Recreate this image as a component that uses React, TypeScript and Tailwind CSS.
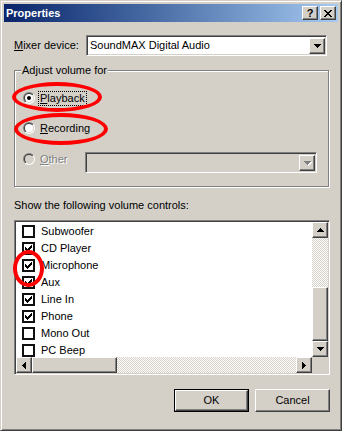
import React from 'react';

const raised =
  'border border-t-white border-l-white border-r-[#404040] border-b-[#404040] shadow-[inset_-1px_-1px_0_#808080]';
const sunken =
  'border border-t-[#808080] border-l-[#808080] border-r-white border-b-white shadow-[inset_1px_1px_0_#404040,inset_-1px_-1px_0_#d4d0c8]';
const checker =
  'bg-[image:repeating-conic-gradient(#ffffff_0%_25%,#d4d0c8_0%_50%)] bg-size-[2px_2px]';

type Dir = 'up' | 'down' | 'left' | 'right';

const arrowPaths: Record<Dir, string> = {
  down: 'M0 0h7v1H0z M1 1h5v1H1z M2 2h3v1H2z M3 3h1v1H3z',
  up: 'M3 0h1v1H3z M2 1h3v1H2z M1 2h5v1H1z M0 3h7v1H0z',
  right: 'M0 0h1v7H0z M1 1h1v5H1z M2 2h1v3H2z M3 3h1v1H3z',
  left: 'M3 0h1v7H3z M2 1h1v5H2z M1 2h1v3H1z M0 3h1v1H0z',
};

const Arrow: React.FC<{ dir: Dir; disabled?: boolean }> = ({ dir, disabled }) => {
  const vertical = dir === 'up' || dir === 'down';
  const w = vertical ? 7 : 4;
  const h = vertical ? 4 : 7;
  return (
    <svg width={w + 1} height={h + 1} viewBox={`0 0 ${w + 1} ${h + 1}`} className="block">
      {disabled && <path d={arrowPaths[dir]} fill="#ffffff" transform="translate(1 1)" />}
      <path d={arrowPaths[dir]} fill={disabled ? '#808080' : '#000000'} />
    </svg>
  );
};

const ScrollBtn: React.FC<{ dir: Dir; disabled?: boolean }> = ({ dir, disabled }) => (
  <div className={`${raised} flex h-[16px] w-[16px] shrink-0 items-center justify-center bg-[#d4d0c8] pl-[1px] pt-[1px]`}>
    <Arrow dir={dir} disabled={disabled} />
  </div>
);

const CloseGlyph = () => (
  <svg width="8" height="7" viewBox="0 0 8 7" className="block">
    <path
      d="M0 0h2v1H0z M6 0h2v1H6z M1 1h2v1H1z M5 1h2v1H5z M2 2h4v1H2z M3 3h2v1H3z M2 4h4v1H2z M1 5h2v1H1z M5 5h2v1H5z M0 6h2v1H0z M6 6h2v1H6z"
      fill="#000"
    />
  </svg>
);

const TitleBtn: React.FC<{ children: React.ReactNode }> = ({ children }) => (
  <div className={`${raised} flex h-[14px] w-[16px] items-center justify-center bg-[#d4d0c8] text-[11px] font-bold leading-none`}>
    {children}
  </div>
);

const Radio: React.FC<{ checked?: boolean; disabled?: boolean }> = ({ checked, disabled }) => (
  <svg width="12" height="12" viewBox="0 0 12 12" className="block shrink-0">
    <defs>
      <linearGradient id="rOuter" x1="0" y1="0" x2="1" y2="1">
        <stop offset="0.5" stopColor="#808080" />
        <stop offset="0.5" stopColor="#ffffff" />
      </linearGradient>
      <linearGradient id="rInner" x1="0" y1="0" x2="1" y2="1">
        <stop offset="0.5" stopColor="#404040" />
        <stop offset="0.5" stopColor="#d4d0c8" />
      </linearGradient>
    </defs>
    <circle cx="6" cy="6" r="6" fill="url(#rOuter)" />
    <circle cx="6" cy="6" r="5" fill="url(#rInner)" />
    <circle cx="6" cy="6" r="4" fill={disabled ? '#d4d0c8' : '#ffffff'} />
    {checked && <circle cx="6" cy="6" r="2" fill="#000" />}
  </svg>
);

const Check = () => (
  <svg width="7" height="7" viewBox="0 0 7 7" className="block">
    <path
      d="M6 0h1v1H6z M5 1h2v1H5z M0 2h1v1H0z M4 2h3v1H4z M0 3h2v1H0z M3 3h3v1H3z M0 4h5v1H0z M1 5h3v1H1z M2 6h1v1H2z"
      fill="#000"
    />
  </svg>
);

const CheckBox: React.FC<{ checked?: boolean }> = ({ checked }) => (
  <div className="flex h-[13px] w-[13px] shrink-0 items-center justify-center border-2 border-[#111] bg-white">
    {checked && <Check />}
  </div>
);

const controls = [
  { label: 'Subwoofer', on: false },
  { label: 'CD Player', on: true },
  { label: 'Microphone', on: true },
  { label: 'Aux', on: true },
  { label: 'Line In', on: true },
  { label: 'Phone', on: true },
  { label: 'Mono Out', on: false },
  { label: 'PC Beep', on: false },
];

export default function App() {
  return (
    <div className="relative flex h-[431px] w-[342px] flex-col border border-t-[#d4d0c8] border-l-[#d4d0c8] border-r-[#404040] border-b-[#404040] bg-[#d4d0c8] p-[3px] font-['Liberation_Sans',Arial,sans-serif] text-[11px] leading-[13px] text-black shadow-[inset_1px_1px_0_#fff,inset_-1px_-1px_0_#808080]">
      {/* title bar */}
      <div className="flex h-[18px] shrink-0 items-center bg-linear-to-r from-[#0a246a] to-[#a6caf0] pl-[2px] pr-[2px]">
        <span className="font-bold text-white">Properties</span>
        <div className="ml-auto flex gap-[2px]">
          <TitleBtn>?</TitleBtn>
          <TitleBtn>
            <CloseGlyph />
          </TitleBtn>
        </div>
      </div>

      <div className="flex flex-1 flex-col pl-[10px] pr-[8px]">
        {/* mixer device */}
        <div className="mt-[13px] flex items-center">
          <span className="w-[72px]">
            <u>M</u>ixer device:
          </span>
          <div className={`${sunken} flex h-[21px] w-[241px] items-center bg-white p-[1px]`}>
            <span className="flex-1 pl-[2px]">SoundMAX Digital Audio</span>
            <ScrollBtn dir="down" />
          </div>
        </div>

        {/* adjust volume group */}
        <div className="relative mr-[1px] mt-[14px] h-[117px] border border-[#808080] shadow-[1px_1px_0_#fff,inset_1px_1px_0_#fff]">
          <span className="absolute -top-[7px] left-[6px] bg-[#d4d0c8] px-[1px]">Adjust volume for</span>
          <div className="flex flex-col pl-[8px] pt-[17px]">
            <div className="flex h-[20px] items-center">
              <Radio checked />
              <span className="ml-[3px] border border-dotted border-black px-[1px]">
                <u>P</u>layback
              </span>
            </div>
            <div className="mt-[10px] flex h-[20px] items-center">
              <Radio />
              <span className="ml-[3px] border border-transparent px-[1px]">
                <u>R</u>ecording
              </span>
            </div>
            <div className="mt-[14px] flex items-start">
              <div className="flex h-[14px] w-[62px] items-center">
                <Radio disabled />
                <span className="ml-[3px] border border-transparent px-[1px] text-[#808080] [text-shadow:1px_1px_0_#fff]">
                  <u>O</u>ther
                </span>
              </div>
              <div className={`${sunken} flex h-[21px] w-[232px] items-center justify-end bg-[#d4d0c8] p-[1px]`}>
                <ScrollBtn dir="down" disabled />
              </div>
            </div>
          </div>
        </div>

        <div className="mt-[12px]">Show the following volume controls:</div>

        {/* list */}
        <div className={`${sunken} mt-[8px] flex flex-col bg-white p-[1px]`}>
          <div className="flex h-[135px]">
            <div className="flex-1 overflow-hidden pt-[1px]">
              {controls.map((c) => (
                <div key={c.label} className="flex h-[17px] items-center gap-[6px] pl-[6px]">
                  <CheckBox checked={c.on} />
                  <span>{c.label}</span>
                </div>
              ))}
            </div>
            <div className="flex w-[16px] flex-col">
              <ScrollBtn dir="up" />
              <div className={`h-[49px] ${checker}`} />
              <div className={`${raised} h-[54px] bg-[#d4d0c8]`} />
              <ScrollBtn dir="down" />
            </div>
          </div>
          <div className="flex h-[16px]">
            <ScrollBtn dir="left" />
            <div className={`${raised} w-[85px] bg-[#d4d0c8]`} />
            <div className={`flex-1 ${checker}`} />
            <ScrollBtn dir="right" />
            <div className="w-[16px] bg-[#d4d0c8]" />
          </div>
        </div>

        {/* buttons */}
        <div className="mt-[14px] flex justify-end gap-[6px]">
          <div className="h-[23px] w-[75px] border border-black">
            <div className={`${raised} flex h-full items-center justify-center`}>OK</div>
          </div>
          <div className={`${raised} flex h-[23px] w-[75px] items-center justify-center`}>Cancel</div>
        </div>
      </div>

      {/* red annotation marks */}
      <div className="pointer-events-none absolute left-[11px] top-[81px] h-[30px] w-[90px] rounded-[50%] border-4 border-[#f00]" />
      <div className="pointer-events-none absolute left-[13px] top-[112px] h-[32px] w-[94px] rounded-[50%] border-4 border-[#f00]" />
      <div className="pointer-events-none absolute left-[12px] top-[249px] h-[37px] w-[31px] rounded-[50%] border-4 border-[#f00]" />
    </div>
  );
}
